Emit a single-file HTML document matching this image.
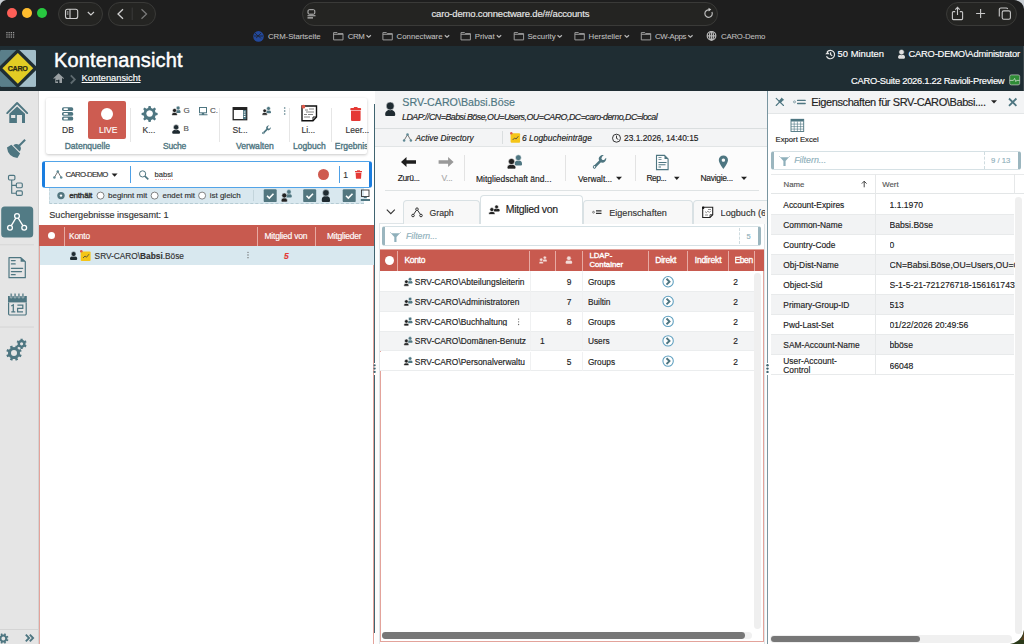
<!DOCTYPE html>
<html><head><meta charset="utf-8">
<style>
*{box-sizing:border-box;margin:0;padding:0}
html,body{width:1024px;height:644px;overflow:hidden;background:#fff;font-family:"Liberation Sans",sans-serif;color:#333}
.a{position:absolute}
.t{position:absolute;white-space:nowrap;line-height:1;-webkit-text-stroke:0.15px currentColor}
svg{position:absolute;overflow:visible}
/* chrome */
#chrome{left:0;top:0;width:1024px;height:46px;background:#1e1e1e}
.pill{position:absolute;border:1px solid #3a3a38;border-radius:12px;background:#242422}
.bm{position:absolute;top:32.7px;font-size:7.8px;color:#bdbdbd;line-height:1;white-space:nowrap;-webkit-text-stroke:0.1px #bdbdbd}
/* header */
#hdr{left:0;top:46px;width:1024px;height:45px;background:#1f2d33}
/* sidebar */
#side{left:0;top:91px;width:39px;height:553px;background:#e5e5e5;border-right:1px solid #d2d2d2}
.ic{fill:#4e7681}
</style></head><body>
<!-- ============ BROWSER CHROME ============ -->
<div id="chrome" class="a">
  <div class="a" style="left:7.3px;top:8.4px;width:10px;height:10px;border-radius:50%;background:#fe5f57"></div>
  <div class="a" style="left:22.3px;top:8.4px;width:10px;height:10px;border-radius:50%;background:#febc2e"></div>
  <div class="a" style="left:37.3px;top:8.4px;width:10px;height:10px;border-radius:50%;background:#28c840"></div>
  <div class="pill" style="left:58px;top:2px;width:45px;height:23.6px"></div>
  <div class="pill" style="left:108px;top:2px;width:48px;height:23.6px"></div>
  <div class="pill" style="left:301.5px;top:2px;width:416.5px;height:23.6px"></div>
  <div class="pill" style="left:945.7px;top:2px;width:71.5px;height:23.8px"></div>
  <div class="t" style="left:431.5px;top:9.2px;font-size:9.5px;color:#e8e8e8;letter-spacing:-0.17px">caro-demo.connectware.de/#/accounts</div>
  <div class="bm" style="left:268px;letter-spacing:-0.05px">CRM-Startseite</div>
  <div class="bm" style="left:347.7px;letter-spacing:-0.3px">CRM</div>
  <div class="bm" style="left:396.6px">Connectware</div>
  <div class="bm" style="left:474.7px">Privat</div>
  <div class="bm" style="left:527.4px">Security</div>
  <div class="bm" style="left:588.6px">Hersteller</div>
  <div class="bm" style="left:655px;letter-spacing:-0.3px">CW-Apps</div>
  <div class="bm" style="left:721px;letter-spacing:-0.2px">CARO-Demo</div>
  <svg style="left:0;top:0" width="1024" height="46">
    <g fill="none" stroke="#d0d0d0" stroke-width="1.1">
      <rect x="65.5" y="9.3" width="12.2" height="9.2" rx="2"/><path d="M70 9.3 v9.2"/>
      <path d="M87.8 12 l3.1 3 3.1-3"/>
      <path d="M123 9.3 l-5 4.7 5 4.7" stroke-width="1.3"/>
      <path d="M141.5 9.3 l5 4.7 -5 4.7" stroke="#7a7a7a" stroke-width="1.3"/>
    </g>
    <path d="M66.8 11.5h1.6v1h-1.6z M66.8 13.5h1.6v1h-1.6z" fill="#d0d0d0"/>
    <line x1="132.2" y1="7.6" x2="132.2" y2="20" stroke="#3a3a3a" stroke-width="1"/>
    <!-- reader -->
    <g fill="none" stroke="#bdbdbd" stroke-width="1"><rect x="308" y="9.7" width="6.8" height="4.5" rx="1.2"/></g>
    <path d="M307.5 15.2h8v1.1h-8z M307.5 17.3h5.5v1.1h-5.5z" fill="#bdbdbd"/>
    <!-- reload -->
    <path d="M711.9 12 a3.7 3.7 0 1 1 -2.6 -2" fill="none" stroke="#bdbdbd" stroke-width="1.2"/>
    <path d="M708.5 7.8 l2.8 1.7 -2.6 2z" fill="#d0d0d0"/>
    <!-- share -->
    <g fill="none" stroke="#c8c8c8" stroke-width="1.1">
      <path d="M955.2 11.6 h-1.8 a1 1 0 0 0 -1 1 v6 a1 1 0 0 0 1 1 h8.2 a1 1 0 0 0 1-1 v-6 a1 1 0 0 0 -1-1 h-1.8"/>
      <path d="M957.5 15 V7.5 M955.3 9.6 l2.2-2.2 2.2 2.2"/>
      <path d="M976.1 13.5 h9 M980.6 9 v9"/>
      <rect x="1002.2" y="10.9" width="8.2" height="8.4" rx="1.6"/>
      <path d="M999.3 16.4 v-6.8 a1.6 1.6 0 0 1 1.6-1.6 h5.3 a1.6 1.6 0 0 1 1.5 1"/>
    </g>
    <!-- grid -->
    <g fill="#9a9a9a">
      <rect x="6.3" y="32" width="1.3" height="1.3"/><rect x="8.5" y="32" width="1.3" height="1.3"/><rect x="10.7" y="32" width="1.3" height="1.3"/><rect x="12.9" y="32" width="1.3" height="1.3"/>
      <rect x="6.3" y="34.2" width="1.3" height="1.3"/><rect x="8.5" y="34.2" width="1.3" height="1.3"/><rect x="10.7" y="34.2" width="1.3" height="1.3"/><rect x="12.9" y="34.2" width="1.3" height="1.3"/>
      <rect x="6.3" y="36.4" width="1.3" height="1.3"/><rect x="8.5" y="36.4" width="1.3" height="1.3"/><rect x="10.7" y="36.4" width="1.3" height="1.3"/><rect x="12.9" y="36.4" width="1.3" height="1.3"/>
    </g>
    <!-- crm globe -->
    <circle cx="258.5" cy="36.4" r="5.3" fill="#23489a"/>
    <path d="M255 33 l3 3 3-3 M256 38 l2.5-2 2.5 2.5 M254 36 h9" stroke="#1e1e1e" stroke-width=".7" fill="none"/>
    <!-- folders -->
    <g fill="none" stroke="#9c9c9c" stroke-width="1">
      <path d="M333.6 32.6 h3.5 l1 1 h4.9 v6.3 h-9.4z M333.6 34.3 h9.4"/>
      <path d="M382.9 32.6 h3.5 l1 1 h4.9 v6.3 h-9.4z M382.9 34.3 h9.4"/>
      <path d="M461 32.6 h3.5 l1 1 h4.9 v6.3 h-9.4z M461 34.3 h9.4"/>
      <path d="M514.2 32.6 h3.5 l1 1 h4.9 v6.3 h-9.4z M514.2 34.3 h9.4"/>
      <path d="M574.9 32.6 h3.5 l1 1 h4.9 v6.3 h-9.4z M574.9 34.3 h9.4"/>
      <path d="M641.3 32.6 h3.5 l1 1 h4.9 v6.3 h-9.4z M641.3 34.3 h9.4"/>
    </g>
    <g fill="none" stroke="#b8b8b8" stroke-width="1.2">
      <path d="M366.5 35.3 l2.2 2 2.2-2"/><path d="M444.8 35.3 l2.2 2 2.2-2"/><path d="M496.8 35.3 l2.2 2 2.2-2"/>
      <path d="M557.5 35.3 l2.2 2 2.2-2"/><path d="M624.6 35.3 l2.2 2 2.2-2"/><path d="M688.2 35.3 l2.2 2 2.2-2"/>
      <circle cx="711.5" cy="35.8" r="4.3"/><path d="M707.2 35.8 h8.6 M711.5 31.5 v8.6"/><ellipse cx="711.5" cy="35.8" rx="2" ry="4.3"/>
    </g>
  </svg>
</div>
<!-- ============ APP HEADER ============ -->
<div id="hdr" class="a">
  <div class="t" style="left:54px;top:3.6px;font-size:20px;color:#fff;letter-spacing:0.15px;-webkit-text-stroke:0.45px #fff">Kontenansicht</div>
  <div class="t" style="left:81.6px;top:28.3px;font-size:9.3px;color:#fff;text-decoration:underline">Kontenansicht</div>
  <div class="t" style="left:837.6px;top:3.3px;font-size:9.4px;color:#fff">50 Minuten</div>
  <div class="t" style="left:908.4px;top:3.3px;font-size:9.4px;color:#fff;letter-spacing:-0.2px">CARO-DEMO\Administrator</div>
  <div class="t" style="left:851px;top:30.3px;font-size:9.4px;color:#fff;letter-spacing:-0.27px">CARO-Suite 2026.1.22 Ravioli-Preview</div>
</div>
<svg style="left:0;top:0" width="1024" height="91">
  <!-- logo -->
  <defs><clipPath id="lc"><rect x="0" y="49.8" width="36" height="37.1" rx="1.5"/></clipPath></defs>
  <g clip-path="url(#lc)">
    <rect x="0" y="49.8" width="18" height="37.1" fill="#5a7f8a"/>
    <rect x="18" y="49.8" width="18" height="37.1" fill="#a2bec9"/>
    <path d="M17.8 48.5 L38 68.3 L17.8 88.1 L-2.4 68.3z" fill="#1f2d33"/>
  </g>
  <path d="M17.8 53 L33.2 68.3 L17.8 83.8 L2.4 68.3z" fill="#e2cc24"/>
  <text x="17.6" y="71" text-anchor="middle" font-family="Liberation Sans" font-weight="bold" font-size="7.2" fill="#2b2a14" stroke="#2b2a14" stroke-width="0.25" letter-spacing="-0.35">CARO</text>
  <!-- home -->
  <path d="M58.6 73.3 L53.3 78.2 L54 78.9 L55.3 77.7 V83.1 H58 V79.8 H59.4 V83.1 H62 V77.7 L63.3 78.9 L64 78.2z" fill="#9aa0a3"/>
  <path d="M56.2 80 h1.6 v1.5 h-1.6z" fill="#1f2d33"/>
  <path d="M70.8 75.3 L74.8 79.4 L70.8 83.5" fill="none" stroke="#5f6b70" stroke-width="1.8"/>
  <!-- history -->
  <g fill="none" stroke="#e8e8e8" stroke-width="1.2"><path d="M827 52 a4.2 4.2 0 1 1 -.5 4.2"/><path d="M830.6 52.2 v2.3 l1.6 1.4"/></g>
  <path d="M825.3 54.2 l2.2-2.8 2.2 2.8z" fill="#e8e8e8"/>
  <!-- user -->
  <g><path d="M898.10 57.60 L898.10 57.14 A3.45 2.55 0 0 1 905.00 57.14 L905.00 57.60 Q905.00 58.70 903.90 58.70 L899.20 58.70 Q898.10 58.70 898.10 57.60Z" fill="#e0e0e0"/><circle cx="901.55" cy="52.10" r="2.70" fill="#e0e0e0" stroke="#1f2d33" stroke-width="0.55"/></g>
  <!-- green -->
  <rect x="1009.7" y="74.9" width="10" height="10" rx="1.6" fill="#2f8c36" stroke="#c5c5c5" stroke-width=".7"/>
  <path d="M1009.7 80.4 h3.7 l1.2-2 1.2 3.2 .8-1.2 h3.1" fill="none" stroke="#c8dcc8" stroke-width=".8"/>
  <rect x="1023" y="46" width="1" height="45" fill="#3d474c"/>
</svg>
<!-- ============ SIDEBAR ============ -->
<div id="side" class="a"></div>

<!-- ============ SIDEBAR ICONS ============ -->
<svg style="left:0;top:0" width="38" height="644">
  <!-- home -->
  <path d="M7.2 113.1 L17.1 103 L27.2 113.1" fill="none" stroke="#4e7681" stroke-width="1.9" stroke-linecap="round" stroke-linejoin="round"/>
  <path class="ic" d="M9.3 113.8 L17.1 106.4 L25 113.8 V122.9 H22 V115 H16.9 V122.9 H9.3z M11.1 115.1 V117.9 H15.3 V115.1z" fill-rule="evenodd"/>
  <!-- broom -->
  <g transform="translate(15.8 149.1) rotate(45)" class="ic">
    <rect x="-0.95" y="-13.2" width="1.9" height="8.5"/>
    <path d="M-4.4 -0.9 Q-4.2 -4.6 -0.9 -5.2 H0.9 Q4.2 -4.6 4.4 -0.9z"/>
    <path d="M-6.2 0.1 H6.2 L7.4 5.1 Q0 11 -7.4 5.1z"/>
  </g>
  <!-- tree -->
  <g fill="none" stroke="#4e7681" stroke-width="1.15">
    <rect x="8.5" y="175.4" width="6.4" height="4.6" rx="1.2"/>
    <rect x="16.3" y="183" width="6" height="4.7" rx="1.2"/>
    <rect x="16.3" y="190.9" width="6" height="4.5" rx="1.2"/>
    <path d="M11.7 180 V193.2 H16.3 M11.7 185.3 H16.3"/>
  </g>
  <!-- active -->
  <rect x="1.2" y="206.6" width="32" height="31" rx="3.5" fill="#527b85"/>
  <g fill="none" stroke="#fff" stroke-width="1.3">
    <circle cx="17" cy="216" r="2.4"/><circle cx="10" cy="227.7" r="2.4"/><circle cx="24.2" cy="227.7" r="2.4"/>
    <path d="M15.8 218.2 L11.3 225.6 M18.2 218.2 L22.9 225.6"/>
  </g>
  <!-- document -->
  <path d="M9 257.7 H20.8 L25.3 261.6 V277.7 H9z" fill="none" stroke="#4e7681" stroke-width="1.2" stroke-linejoin="round"/>
  <path d="M20.6 257.6 V261.8 H25.4 z" fill="#4e7681"/>
  <path d="M11.4 260.6 h3.8 M11.4 263.9 h3.8 M11.4 268.3 h11.3 M11.4 271.6 h10.1 M11.4 274.7 h3.8" stroke="#4e7681" stroke-width="1.2" stroke-linecap="round"/>
  <!-- calendar -->
  <path d="M8.6 302.5 V313.8 a1.2 1.2 0 0 0 1.2 1.2 H25 a1.2 1.2 0 0 0 1.2-1.2 V302.5" fill="none" stroke="#4e7681" stroke-width="1.2"/>
  <rect x="8" y="296" width="18.8" height="6.4" fill="#4e7681"/>
  <g fill="#4e7681" stroke="#e5e5e5" stroke-width=".6">
    <rect x="10.2" y="293.3" width="1.9" height="4.6" rx=".6"/><rect x="14.1" y="293.3" width="1.9" height="4.6" rx=".6"/><rect x="18" y="293.3" width="1.9" height="4.6" rx=".6"/><rect x="22" y="293.3" width="1.9" height="4.6" rx=".6"/>
  </g>
  <path d="M11.3 306 L13.3 304.9 V311.8 M11.3 311.8 H15.3 M17.4 305.2 H22.8 V308.3 H17.6 V311.8 H23" fill="none" stroke="#4e7681" stroke-width="1.25"/>
  <line x1="0" y1="327" x2="34" y2="327" stroke="#d4d4d4" stroke-width="1"/><line x1="0" y1="244.8" x2="34" y2="244.8" stroke="#d6d6d6" stroke-width="1"/>
  <!-- gears -->
  <path class="ic" fill-rule="evenodd" d="M20.00 353.10 L19.89 354.22 L21.70 354.88 L20.70 357.28 L18.96 356.47 L18.24 357.34 L17.37 358.06 L18.18 359.80 L15.78 360.80 L15.12 358.99 L14.00 359.10 L12.88 358.99 L12.22 360.80 L9.82 359.80 L10.63 358.06 L9.76 357.34 L9.04 356.47 L7.30 357.28 L6.30 354.88 L8.11 354.22 L8.00 353.10 L8.11 351.98 L6.30 351.32 L7.30 348.92 L9.04 349.73 L9.76 348.86 L10.63 348.14 L9.82 346.40 L12.22 345.40 L12.88 347.21 L14.00 347.10 L15.12 347.21 L15.78 345.40 L18.18 346.40 L17.37 348.14 L18.24 348.86 L18.96 349.73 L20.70 348.92 L21.70 351.32 L19.89 351.98Z M17.00 353.10 A3.0 3.0 0 1 0 11.00 353.10 A3.0 3.0 0 1 0 17.00 353.10Z"/>
  <path class="ic" fill-rule="evenodd" d="M25.60 343.80 L25.47 344.79 L26.66 345.38 L25.50 347.39 L24.40 346.66 L23.60 347.26 L22.68 347.65 L22.76 348.97 L20.44 348.97 L20.52 347.65 L19.60 347.26 L18.80 346.66 L17.70 347.39 L16.54 345.38 L17.73 344.79 L17.60 343.80 L17.73 342.81 L16.54 342.22 L17.70 340.21 L18.80 340.94 L19.60 340.34 L20.52 339.95 L20.44 338.63 L22.76 338.63 L22.68 339.95 L23.60 340.34 L24.40 340.94 L25.50 340.21 L26.66 342.22 L25.47 342.81Z M23.20 343.80 A1.6 1.6 0 1 0 20.00 343.80 A1.6 1.6 0 1 0 23.20 343.80Z"/>
  <line x1="0" y1="629.5" x2="38" y2="629.5" stroke="#d4d4d4" stroke-width="1"/>
  <path d="M25.8 634.6 L29.1 638 L25.8 641.4 M29.8 634.6 L33.1 638 L29.8 641.4" fill="none" stroke="#4e7681" stroke-width="1.9"/>
  <path class="ic" fill-rule="evenodd" d="M7.30 638.50 L7.23 639.25 L8.46 639.70 L7.80 641.30 L6.61 640.75 L6.13 641.33 L5.55 641.81 L6.10 643.00 L4.50 643.66 L4.05 642.43 L3.30 642.50 L2.55 642.43 L2.10 643.66 L0.50 643.00 L1.05 641.81 L0.47 641.33 L-0.01 640.75 L-1.20 641.30 L-1.86 639.70 L-0.63 639.25 L-0.70 638.50 L-0.63 637.75 L-1.86 637.30 L-1.20 635.70 L-0.01 636.25 L0.47 635.67 L1.05 635.19 L0.50 634.00 L2.10 633.34 L2.55 634.57 L3.30 634.50 L4.05 634.57 L4.50 633.34 L6.10 634.00 L5.55 635.19 L6.13 635.67 L6.61 636.25 L7.80 635.70 L8.46 637.30 L7.23 637.75Z M5.20 638.50 A1.9 1.9 0 1 0 1.40 638.50 A1.9 1.9 0 1 0 5.20 638.50Z"/>
</svg>
<!-- ============ LEFT PANEL ============ -->
<div class="a" style="left:39px;top:91px;width:335px;height:553px;background:#fff"></div>
<!-- ribbon card -->
<div class="a" style="left:46px;top:98px;width:321px;height:56px;background:#fff;box-shadow:0 1px 3px rgba(0,0,0,.22);border-radius:2px"></div>
<div class="a" style="left:88.2px;top:101px;width:38.3px;height:38px;background:#cd5c51;border-radius:2px"></div>
<div class="a" style="left:101.3px;top:107.8px;width:12px;height:12px;border-radius:50%;background:#fff"></div>
<div class="t" style="left:99px;top:125.5px;font-size:8.5px;color:#fff">LIVE</div>
<div class="t" style="left:62px;top:125.5px;font-size:8.5px;color:#333">DB</div>
<div class="t" style="left:142.5px;top:125.5px;font-size:8.5px;color:#333">K...</div>
<div class="t" style="left:183.5px;top:107px;font-size:8px;color:#555">G</div>
<div class="t" style="left:183.5px;top:125px;font-size:8px;color:#555">B</div>
<div class="t" style="left:210px;top:107px;font-size:8px;color:#555">C.</div>
<div class="t" style="left:232.5px;top:125.5px;font-size:8.5px;color:#333">St...</div>
<div class="t" style="left:301.5px;top:125.5px;font-size:8.5px;color:#333">Li...</div>
<div class="t" style="left:345.5px;top:125.5px;font-size:8.5px;color:#333">Leer...</div>
<div class="t" style="left:64.7px;top:142.2px;font-size:8.5px;color:#4e7681;-webkit-text-stroke:0.35px #4e7681">Datenquelle</div>
<div class="t" style="left:163px;top:142.2px;font-size:8.5px;letter-spacing:-0.2px;color:#4e7681;-webkit-text-stroke:0.35px #4e7681">Suche</div>
<div class="t" style="left:236px;top:142.2px;font-size:8.6px;color:#4e7681;-webkit-text-stroke:0.35px #4e7681">Verwalten</div>
<div class="t" style="left:293px;top:142.2px;font-size:8.5px;color:#4e7681;-webkit-text-stroke:0.35px #4e7681">Logbuch</div>
<div class="t" style="left:334.8px;top:142.2px;font-size:8.5px;color:#4e7681;width:32px;overflow:hidden;-webkit-text-stroke:0.35px #4e7681">Ergebnis</div>
<div class="a" style="left:130px;top:108px;width:1px;height:34px;background:#e6e6e6"></div>
<div class="a" style="left:219.4px;top:108px;width:1px;height:34px;background:#e6e6e6"></div>
<div class="a" style="left:289px;top:108px;width:1px;height:34px;background:#e6e6e6"></div>
<div class="a" style="left:331.3px;top:108px;width:1px;height:34px;background:#e6e6e6"></div>
<svg style="left:0;top:0" width="380" height="644">
  <!-- DB icon -->
  <g fill="#4e7681">
    <rect x="62" y="107.2" width="11.2" height="3.9" rx="1.6"/>
    <rect x="62" y="111.9" width="11.2" height="3.9" rx="1.6"/>
    <rect x="62" y="116.6" width="11.2" height="3.9" rx="1.6"/>
  </g>
  <g fill="#fff"><rect x="63.6" y="108.3" width="4.3" height="1.8" rx=".5"/><rect x="63.6" y="113" width="4.3" height="1.8" rx=".5"/><rect x="63.6" y="117.7" width="4.3" height="1.8" rx=".5"/></g>
  <!-- gear -->
  <g fill="#4e7681">
    <path d="M148.6 106 h2 l.5 2 1.7.7 1.8-1.1 1.4 1.4-1.1 1.8 .7 1.7 2 .5 v2 l-2 .5-.7 1.7 1.1 1.8-1.4 1.4-1.8-1.1-1.7.7-.5 2 h-2 l-.5-2-1.7-.7-1.8 1.1-1.4-1.4 1.1-1.8-.7-1.7-2-.5 v-2 l2-.5 .7-1.7-1.1-1.8 1.4-1.4 1.8 1.1 1.7-.7z M149.6 110.2 a3.3 3.3 0 1 0 .01 0z" fill-rule="evenodd"/>
  </g>
  <!-- group small -->
  <g>
    <path d="M175.60 112.20 L175.60 111.78 A2.50 1.98 0 0 1 180.60 111.78 L180.60 112.20 Q180.60 113.00 179.80 113.00 L176.40 113.00 Q175.60 113.00 175.60 112.20Z" fill="#4e7681"/><circle cx="178.10" cy="108.00" r="2.00" fill="#4e7681" stroke="#fff" stroke-width="0.55"/>
    <path d="M171.80 114.62 L171.80 114.29 A2.75 1.97 0 0 1 177.30 114.29 L177.30 114.62 Q177.30 115.50 176.42 115.50 L172.68 115.50 Q171.80 115.50 171.80 114.62Z" fill="#222" stroke="#fff" stroke-width="0.6"/><circle cx="174.55" cy="110.46" r="2.06" fill="#222" stroke="#fff" stroke-width="0.55"/>
  </g>
  <!-- person small -->
  <g><path d="M172.20 132.70 L172.20 132.26 A3.90 2.52 0 0 1 180.00 132.26 L180.00 132.70 Q180.00 133.80 178.90 133.80 L173.30 133.80 Q172.20 133.80 172.20 132.70Z" fill="#1f2b31"/><circle cx="176.10" cy="127.27" r="2.67" fill="#1f2b31" stroke="#fff" stroke-width="0.55"/></g>
  <!-- monitor -->
  <g fill="none" stroke="#4e7681" stroke-width="1"><rect x="199.5" y="107.5" width="7" height="5.3"/></g>
  <path d="M201.8 113 h2.4 v1.2 h-2.4z M199 114.3 h8.5 v1 h-8.5z" fill="#4e7681"/>
  <!-- window icon -->
  <g><rect x="233.2" y="107.7" width="13.5" height="12" fill="none" stroke="#222" stroke-width="1.3"/><rect x="233" y="107.5" width="14" height="2.5" fill="#222"/>
  <rect x="243" y="110" width="3.2" height="9.2" fill="#4e7681"/><path d="M243.8 111.5h1.6v1h-1.6z M243.8 113.8h1.6v1h-1.6z M243.8 116.1h1.6v1h-1.6z" fill="#fff"/></g>
  <!-- group -->
  <g>
    <path d="M266.00 112.40 L266.00 112.05 A2.50 1.87 0 0 1 271.00 112.05 L271.00 112.40 Q271.00 113.20 270.20 113.20 L266.80 113.20 Q266.00 113.20 266.00 112.40Z" fill="#4e7681"/><circle cx="268.50" cy="108.44" r="1.94" fill="#4e7681" stroke="#fff" stroke-width="0.55"/>
    <path d="M262.00 114.34 L262.00 114.13 A2.70 1.74 0 0 1 267.40 114.13 L267.40 114.34 Q267.40 115.20 266.54 115.20 L262.86 115.20 Q262.00 115.20 262.00 114.34Z" fill="#222" stroke="#fff" stroke-width="0.6"/><circle cx="264.70" cy="110.80" r="1.80" fill="#222" stroke="#fff" stroke-width="0.55"/>
  </g>
  <!-- wrench -->
  <g transform="translate(263.2 133.2) rotate(-45) scale(0.64)"><path d="M0 -1.3 H9.5 V1.3 H0 A1.3 1.3 0 0 1 0 -1.3Z" fill="#4e7681"/><circle cx="0.3" cy="0" r="1.7" fill="#4e7681"/><circle cx="11.6" cy="0" r="3.6" fill="#4e7681"/><circle cx="12.6" cy="0" r="1.75" fill="#fff"/><rect x="12.6" y="-1.75" width="4" height="3.5" fill="#fff"/><circle cx="0.3" cy="0" r="0.75" fill="#fff"/></g>
  <!-- dots -->
  <g fill="#4e7681"><circle cx="284.7" cy="108" r=".8"/><circle cx="284.7" cy="111" r=".8"/><circle cx="284.7" cy="114" r=".8"/></g>
  <!-- logbook icon -->
  <g><path d="M302 106 h14.5 v11 l-3.5 3.8 h-11z" fill="#fff" stroke="#111" stroke-width="1.4"/>
  <path d="M316.5 117 h-3.5 v3.8" fill="none" stroke="#111" stroke-width="1"/>
  <circle cx="303.4" cy="106.7" r="1.9" fill="#e05a4a"/>
  <path d="M305 110 h3 M309 109 h5 M306 112 h8 M304 114.5 h3 M308 114.5 h5 M304 117 h6" stroke="#333" stroke-width=".6"/></g>
  <!-- trash -->
  <g fill="#e53935"><rect x="350.3" y="108" width="10.8" height="2.2" rx=".8"/><rect x="353.8" y="107" width="3.8" height="1.6" rx=".5"/><path d="M351 110.8 h9.6 v9.2 a1 1 0 0 1 -1 1 h-7.6 a1 1 0 0 1 -1-1z"/></g>
</svg>
<!-- search box -->
<div class="a" style="left:41.5px;top:161px;width:330px;height:26.5px;border:1px solid #52a4e8;border-left:3.5px solid #1a7ee0;border-right:3.5px solid #1a7ee0;border-radius:3px;background:#fff"></div>
<div class="a" style="left:130.3px;top:166.3px;width:1.2px;height:17px;background:#4ea0e6"></div>
<div class="a" style="left:339.3px;top:166.3px;width:1.2px;height:17px;background:#4ea0e6"></div>
<div class="t" style="left:65.6px;top:171.2px;font-size:7.8px;color:#333;letter-spacing:-0.72px">CARO-DEMO</div>
<div class="t" style="left:154.6px;top:171px;font-size:7.6px;color:#333">babsi</div>
<div class="a" style="left:154.6px;top:178.5px;width:18px;height:1px;border-bottom:1px dotted #f0b0b0"></div>
<div class="t" style="left:343.3px;top:170.5px;font-size:8.5px;color:#333">1</div>
<div class="a" style="left:318.3px;top:168.8px;width:11px;height:11px;border-radius:50%;background:#cf5a4f"></div>
<svg style="left:0;top:0" width="380" height="260">
  <path d="M57.8 171.6 L54.4 177.4 M57.8 171.6 L61.2 177.4" stroke="#555" stroke-width=".8" fill="none"/><g fill="#5f8a95"><circle cx="57.8" cy="171.6" r="1.25"/><circle cx="54.4" cy="177.4" r="1.25"/><circle cx="61.2" cy="177.4" r="1.25"/></g>
  <path d="M111.6 173.5 h6 l-3 3.3z" fill="#222"/>
  <g fill="none" stroke="#4e7681" stroke-width="1"><circle cx="142.6" cy="173.9" r="3.1"/><path d="M144.9 176.2 L148.3 179.4" stroke-width="1.6"/></g>
  <g fill="#e53935"><rect x="355" y="171" width="7" height="1.2"/><rect x="357" y="170.3" width="3" height="1"/><path d="M355.6 172.8 h5.8 l-.4 6 h-5z"/></g>
</svg>
<!-- radio row -->
<div class="a" style="left:49px;top:188px;width:315px;height:15.8px;background:#d9e8ef;border-bottom:1px dashed #b5cbd3;border-left:1px dashed #c5d7de"></div>
<div class="a" style="left:252.5px;top:190px;width:1px;height:11px;background:#c3d5dc"></div>
<svg style="left:0;top:0" width="380" height="260">
  <circle cx="61" cy="195.6" r="3.7" fill="#52767f"/><circle cx="61" cy="195.6" r="1.2" fill="#fff"/>
  <circle cx="100.5" cy="195.6" r="3.5" fill="#fff" stroke="#666" stroke-width=".8"/>
  <circle cx="154.6" cy="195.6" r="3.5" fill="#fff" stroke="#666" stroke-width=".8"/>
  <circle cx="202.1" cy="195.6" r="3.5" fill="#fff" stroke="#666" stroke-width=".8"/>
  <g fill="#52767f"><rect x="263.7" y="189.3" width="13" height="12.8" rx="1.2"/><rect x="303.2" y="189.3" width="13" height="12.8" rx="1.2"/><rect x="342.7" y="189.3" width="13" height="12.8" rx="1.2"/></g>
  <g fill="none" stroke="#fff" stroke-width="1.6"><path d="M267 195.8 l2.3 2.3 4.2-4.4"/><path d="M306.5 195.8 l2.3 2.3 4.2-4.4"/><path d="M346 195.8 l2.3 2.3 4.2-4.4"/></g>
  <g>
    <path d="M286.00 196.57 L286.00 196.16 A2.90 2.18 0 0 1 291.80 196.16 L291.80 196.57 Q291.80 197.50 290.87 197.50 L286.93 197.50 Q286.00 197.50 286.00 196.57Z" fill="#4e7681"/><circle cx="288.90" cy="191.89" r="2.29" fill="#4e7681" stroke="#d9e8ef" stroke-width="0.55"/>
    <path d="M281.20 201.01 L281.20 200.39 A3.10 2.63 0 0 1 287.40 200.39 L287.40 201.01 Q287.40 202.00 286.41 202.00 L282.19 202.00 Q281.20 202.00 281.20 201.01Z" fill="#222" stroke="#d9e8ef" stroke-width="0.6"/><circle cx="284.30" cy="195.48" r="2.48" fill="#222" stroke="#d9e8ef" stroke-width="0.55"/>
  </g>
  <g><path d="M321.80 200.90 L321.80 199.70 A4.10 3.74 0 0 1 330.00 199.70 L330.00 200.90 Q330.00 202.00 328.90 202.00 L322.90 202.00 Q321.80 202.00 321.80 200.90Z" fill="#1f2b31"/><circle cx="325.90" cy="192.88" r="3.28" fill="#1f2b31" stroke="#d9e8ef" stroke-width="0.55"/></g>
  <g fill="none" stroke="#333" stroke-width=".9"><rect x="361.5" y="190" width="7.5" height="6.5"/></g>
  <path d="M363.8 196.8 h3 v1.5 h-3z M360.8 199 h9.2 v2 h-9.2z" fill="#4e7681"/>
</svg>
<div class="t" style="left:69.2px;top:192.2px;font-size:8px;color:#333;letter-spacing:-0.15px;-webkit-text-stroke:0.4px #333">enthält</div>
<div class="t" style="left:108px;top:192.2px;font-size:8px;color:#333">beginnt mit</div>
<div class="t" style="left:162.6px;top:192.2px;font-size:7.9px;color:#333">endet mit</div>
<div class="t" style="left:209.7px;top:192.2px;font-size:8px;color:#333">ist gleich</div>
<div class="t" style="left:49.3px;top:211px;font-size:9.1px;color:#333">Suchergebnisse insgesamt: 1</div>
<!-- left table -->
<div class="a" style="left:39px;top:225px;width:335px;height:419px;border-left:1px solid #e3a39b;border-right:1px solid #e3a39b"></div>
<div class="a" style="left:39px;top:225.3px;width:334.5px;height:20.4px;background:#c85a4f"></div>
<div class="a" style="left:48px;top:232.3px;width:7px;height:7px;border-radius:50%;background:#fff"></div>
<div class="a" style="left:63.8px;top:227px;width:1px;height:18.7px;background:#e7aaa3"></div>
<div class="a" style="left:256.8px;top:227px;width:1px;height:18.7px;background:#e7aaa3"></div>
<div class="a" style="left:314.5px;top:227px;width:1px;height:18.7px;background:#e7aaa3"></div>
<div class="t" style="left:69px;top:232px;font-size:8.3px;color:#fff;letter-spacing:-0.15px">Konto</div>
<div class="t" style="left:264.5px;top:231.5px;font-size:8.5px;color:#fff;letter-spacing:-0.22px">Mitglied von</div>
<div class="t" style="left:327px;top:231.5px;font-size:8.5px;color:#fff;letter-spacing:-0.26px">Mitglieder</div>
<div class="a" style="left:40px;top:245.7px;width:333.5px;height:19px;background:#d8e8ef"></div>
<div class="t" style="left:94.6px;top:251.5px;font-size:8.3px;color:#333">SRV-CARO\<b>Babsi</b>.Böse</div>
<div class="t" style="left:284px;top:251.5px;font-size:8.5px;color:#e53935;font-weight:bold;font-style:italic">5</div>
<svg style="left:0;top:0" width="380" height="270">
  <g><path d="M70.00 258.90 L70.00 258.58 A3.60 2.31 0 0 1 77.20 258.58 L77.20 258.90 Q77.20 260.00 76.10 260.00 L71.10 260.00 Q70.00 260.00 70.00 258.90Z" fill="#1f2b31"/><circle cx="73.60" cy="254.04" r="2.44" fill="#1f2b31" stroke="#d8e8ef" stroke-width="0.55"/></g>
  <rect x="80.7" y="251.5" width="9.9" height="9.5" rx="1" fill="#f5c518"/>
  <circle cx="81.3" cy="251.3" r="1.3" fill="#e05a4a"/>
  <path d="M83 258 l2-2 1.5 1.2 2.5-3" stroke="#444" stroke-width=".8" fill="none"/>
  <g fill="#666"><circle cx="248" cy="252.3" r=".65"/><circle cx="248" cy="255" r=".65"/><circle cx="248" cy="257.7" r=".65"/></g>
</svg>
<!-- splitter -->
<div class="a" style="left:374px;top:104px;width:1.2px;height:529px;background:#3f6470"></div>

<!-- ============ MIDDLE PANEL ============ -->
<div class="a" style="left:375.2px;top:91px;width:392px;height:553px;background:#fcfcfc"></div>
<div class="a" style="left:375.2px;top:91px;width:392px;height:56px;background:#f3f4f5;border-bottom:1px solid #e2e5e6"></div>
<div class="a" style="left:375.2px;top:128px;width:392px;height:1px;background:#dadedf"></div>
<div class="t" style="left:402.3px;top:96.6px;font-size:10.7px;color:#4e7681">SRV-CARO\Babsi.Böse</div>
<div class="t" style="left:402px;top:112.6px;font-size:8.9px;font-style:italic;color:#222;letter-spacing:-0.52px">LDAP://CN=Babsi.Böse,OU=Users,OU=CARO,DC=caro-demo,DC=local</div>
<div class="t" style="left:415.5px;top:134.3px;font-size:8.3px;font-style:italic;color:#222">Active Directory</div>
<div class="a" style="left:502px;top:131px;width:1px;height:13px;background:#dadedf"></div>
<div class="t" style="left:522px;top:134.3px;font-size:8.45px;font-style:italic;color:#222">6 Logbucheinträge</div>
<div class="t" style="left:624px;top:134.3px;font-size:8.4px;color:#222">23.1.2026, 14:40:15</div>
<!-- toolbar -->
<div class="t" style="left:397.7px;top:174.3px;font-size:8.5px;color:#222;letter-spacing:-0.38px">Zurü...</div>
<div class="t" style="left:441.5px;top:174.3px;font-size:8.5px;color:#aaa;letter-spacing:-0.3px">V...</div>
<div class="t" style="left:476px;top:174.5px;font-size:8.5px;color:#222">Mitgliedschaft änd...</div>
<div class="t" style="left:578px;top:174.5px;font-size:8.3px;color:#222">Verwalt...</div>
<div class="t" style="left:646.5px;top:174.3px;font-size:8.5px;color:#222;letter-spacing:-0.53px">Rep...</div>
<div class="t" style="left:700.5px;top:174.3px;font-size:8.5px;color:#222;letter-spacing:-0.32px">Navigie...</div>
<div class="a" style="left:463.6px;top:155.4px;width:1px;height:26px;background:#e3e3e3"></div>
<div class="a" style="left:565.3px;top:155.4px;width:1px;height:26px;background:#e3e3e3"></div>
<div class="a" style="left:634.5px;top:155.4px;width:1px;height:26px;background:#e3e3e3"></div>
<div class="a" style="left:385px;top:190px;width:374px;height:1px;background:#dfe3e4"></div>
<!-- tabs -->
<div class="a" style="left:379px;top:223px;width:386px;height:421px;border:1px solid #dfe5e8;border-bottom:none;background:#fff"></div>
<div class="a" style="left:402.5px;top:200.3px;width:77.5px;height:23.5px;background:#f8f8f8;border:1px solid #d9e1e4;border-bottom:none;border-radius:4px 4px 0 0"></div>
<div class="a" style="left:480px;top:195px;width:103px;height:29px;background:#fff;border:1px solid #d9e1e4;border-bottom:none;border-radius:4px 4px 0 0"></div>
<div class="a" style="left:583px;top:200.3px;width:110px;height:23.5px;background:#f8f8f8;border:1px solid #d9e1e4;border-bottom:none;border-radius:4px 4px 0 0"></div>
<div class="a" style="left:693.4px;top:200.3px;width:80px;height:23.5px;background:#f8f8f8;border:1px solid #d9e1e4;border-bottom:none;border-radius:4px 4px 0 0"></div>
<div class="a" style="left:767px;top:195px;width:10px;height:30px;background:#fff"></div>
<div class="t" style="left:429.5px;top:208.6px;font-size:8.7px;color:#333">Graph</div>
<div class="t" style="left:505.8px;top:204.3px;font-size:10.5px;color:#222;letter-spacing:-0.35px">Mitglied von</div>
<div class="t" style="left:609.2px;top:208.7px;font-size:9.1px;color:#333">Eigenschaften</div>
<div class="t" style="left:720.6px;top:208.7px;font-size:9.1px;color:#333;width:44.5px;overflow:hidden">Logbuch (6</div>
<!-- filter -->
<div class="a" style="left:382px;top:226.4px;width:379px;height:19.6px;border:1px solid #d6e1e5;border-left:3.5px solid #9bb6bf;border-right:3.5px solid #9bb6bf;border-radius:3px;background:#fff"></div>
<div class="a" style="left:739.4px;top:228px;width:0;height:16px;border-left:1px dashed #cfdce0"></div>
<div class="t" style="left:406px;top:232px;font-size:8.7px;font-style:italic;color:#8fb0bb">Filtern...</div>
<div class="t" style="left:746.5px;top:232.5px;font-size:7.5px;color:#8fb0bb">5</div>
<!-- table -->
<div class="a" style="left:379.5px;top:249px;width:384.5px;height:392.5px;border:1px solid #e3a39b;background:#fff"></div>
<div class="a" style="left:380px;top:250px;width:383.5px;height:21px;background:#c85a4f"></div>
<div class="a" style="left:384.7px;top:256px;width:9px;height:9px;border-radius:50%;background:#fff"></div>
<div class="a" style="left:397px;top:250.5px;width:1px;height:20.5px;background:#e7aaa3"></div>
<div class="a" style="left:529px;top:250.5px;width:1px;height:20.5px;background:#e7aaa3"></div>
<div class="a" style="left:555px;top:250.5px;width:1px;height:20.5px;background:#e7aaa3"></div>
<div class="a" style="left:582.4px;top:250.5px;width:1px;height:20.5px;background:#e7aaa3"></div>
<div class="a" style="left:648.3px;top:250.5px;width:1px;height:20.5px;background:#e7aaa3"></div>
<div class="a" style="left:687.3px;top:250.5px;width:1px;height:20.5px;background:#e7aaa3"></div>
<div class="a" style="left:727.8px;top:250.5px;width:1px;height:20.5px;background:#e7aaa3"></div>
<div class="a" style="left:754.3px;top:250.5px;width:1px;height:20.5px;background:#e7aaa3"></div>
<div class="t" style="left:404.5px;top:256px;font-size:8.5px;color:#fff;letter-spacing:-0.34px;-webkit-text-stroke:0.35px #fff">Konto</div>
<div class="t" style="left:589.4px;top:251px;font-size:7.8px;color:#fff;line-height:9.4px;-webkit-text-stroke:0.35px #fff">LDAP-<br>Container</div>
<div class="t" style="left:655.2px;top:256px;font-size:8.5px;color:#fff;letter-spacing:-0.18px;-webkit-text-stroke:0.35px #fff">Direkt</div>
<div class="t" style="left:694.7px;top:256px;font-size:8.5px;color:#fff;letter-spacing:-0.14px;-webkit-text-stroke:0.35px #fff">Indirekt</div>
<div class="t" style="left:734.5px;top:256px;font-size:8.5px;color:#fff;letter-spacing:-0.4px;-webkit-text-stroke:0.35px #fff;width:19.5px;overflow:hidden">Eben</div>
<div class="a" style="left:754.3px;top:273.4px;width:6.8px;height:355.6px;background:#efefef;border-radius:3.4px"></div>
<div class="a" style="left:380px;top:270.80px;width:374px;height:20.90px;background:#fff;border-bottom:1px solid #ebedee"></div>
<div class="a" style="left:529.5px;top:270.80px;width:1px;height:20.90px;background:#f0f1f2"></div>
<div class="a" style="left:582.3px;top:270.80px;width:1px;height:20.90px;background:#f0f1f2"></div>
<div class="t" style="left:414.8px;top:278.20px;font-size:8.4px;color:#222;width:113px;overflow:hidden">SRV-CARO\Abteilungsleiterin</div>
<div class="t" style="left:566.7px;top:278.20px;font-size:8.4px;color:#222">9</div>
<div class="t" style="left:587.9px;top:278.20px;font-size:8.3px;color:#222">Groups</div>
<div class="t" style="left:733.2px;top:278.20px;font-size:8.4px;color:#222">2</div>
<svg style="left:0;top:0" width="760" height="400">
<path d="M407.60 282.80 L407.60 282.53 A2.50 1.74 0 0 1 412.60 282.53 L412.60 282.80 Q412.60 283.60 411.80 283.60 L408.40 283.60 Q407.60 283.60 407.60 282.80Z" fill="#4e7681"/><circle cx="410.10" cy="279.20" r="1.80" fill="#4e7681" stroke="#fff" stroke-width="0.55"/>
<path d="M403.80 285.38 L403.80 285.12 A2.55 1.76 0 0 1 408.90 285.12 L408.90 285.38 Q408.90 286.20 408.08 286.20 L404.62 286.20 Q403.80 286.20 403.80 285.38Z" fill="#222" stroke="#fff" stroke-width="0.6"/><circle cx="406.35" cy="281.73" r="1.83" fill="#222" stroke="#fff" stroke-width="0.55"/>
<circle cx="668.1" cy="281.70" r="5.2" fill="#fff" stroke="#5e9fbf" stroke-width="1.05"/><path d="M666.5 278.80 L669.5 281.70 L666.5 284.60" fill="none" stroke="#4e7681" stroke-width="1.9"/>
</svg>
<div class="a" style="left:380px;top:291.70px;width:374px;height:20.60px;background:#f3f4f5;border-bottom:1px solid #ebedee"></div>
<div class="a" style="left:529.5px;top:291.70px;width:1px;height:20.60px;background:#f0f1f2"></div>
<div class="a" style="left:582.3px;top:291.70px;width:1px;height:20.60px;background:#f0f1f2"></div>
<div class="t" style="left:414.8px;top:298.00px;font-size:8.4px;color:#222;width:113px;overflow:hidden">SRV-CARO\Administratoren</div>
<div class="t" style="left:566.7px;top:298.00px;font-size:8.4px;color:#222">7</div>
<div class="t" style="left:587.9px;top:298.00px;font-size:8.3px;color:#222">Builtin</div>
<div class="t" style="left:733.2px;top:298.00px;font-size:8.4px;color:#222">2</div>
<svg style="left:0;top:0" width="760" height="400">
<path d="M407.60 302.60 L407.60 302.33 A2.50 1.74 0 0 1 412.60 302.33 L412.60 302.60 Q412.60 303.40 411.80 303.40 L408.40 303.40 Q407.60 303.40 407.60 302.60Z" fill="#4e7681"/><circle cx="410.10" cy="299.00" r="1.80" fill="#4e7681" stroke="#f3f4f5" stroke-width="0.55"/>
<path d="M403.80 305.18 L403.80 304.92 A2.55 1.76 0 0 1 408.90 304.92 L408.90 305.18 Q408.90 306.00 408.08 306.00 L404.62 306.00 Q403.80 306.00 403.80 305.18Z" fill="#222" stroke="#f3f4f5" stroke-width="0.6"/><circle cx="406.35" cy="301.53" r="1.83" fill="#222" stroke="#f3f4f5" stroke-width="0.55"/>
<circle cx="668.1" cy="301.50" r="5.2" fill="#fff" stroke="#5e9fbf" stroke-width="1.05"/><path d="M666.5 298.60 L669.5 301.50 L666.5 304.40" fill="none" stroke="#4e7681" stroke-width="1.9"/>
</svg>
<div class="a" style="left:380px;top:312.30px;width:374px;height:19.60px;background:#fff;border-bottom:1px solid #ebedee"></div>
<div class="a" style="left:529.5px;top:312.30px;width:1px;height:19.60px;background:#f0f1f2"></div>
<div class="a" style="left:582.3px;top:312.30px;width:1px;height:19.60px;background:#f0f1f2"></div>
<div class="t" style="left:414.8px;top:317.90px;font-size:8.4px;color:#222;width:113px;overflow:hidden">SRV-CARO\Buchhaltung</div>
<div class="t" style="left:566.7px;top:317.90px;font-size:8.4px;color:#222">8</div>
<div class="t" style="left:587.9px;top:317.90px;font-size:8.3px;color:#222">Groups</div>
<div class="t" style="left:733.2px;top:317.90px;font-size:8.4px;color:#222">2</div>
<svg style="left:0;top:0" width="760" height="400">
<path d="M407.60 322.50 L407.60 322.23 A2.50 1.74 0 0 1 412.60 322.23 L412.60 322.50 Q412.60 323.30 411.80 323.30 L408.40 323.30 Q407.60 323.30 407.60 322.50Z" fill="#4e7681"/><circle cx="410.10" cy="318.90" r="1.80" fill="#4e7681" stroke="#fff" stroke-width="0.55"/>
<path d="M403.80 325.08 L403.80 324.82 A2.55 1.76 0 0 1 408.90 324.82 L408.90 325.08 Q408.90 325.90 408.08 325.90 L404.62 325.90 Q403.80 325.90 403.80 325.08Z" fill="#222" stroke="#fff" stroke-width="0.6"/><circle cx="406.35" cy="321.43" r="1.83" fill="#222" stroke="#fff" stroke-width="0.55"/>
<circle cx="668.1" cy="321.40" r="5.2" fill="#fff" stroke="#5e9fbf" stroke-width="1.05"/><path d="M666.5 318.50 L669.5 321.40 L666.5 324.30" fill="none" stroke="#4e7681" stroke-width="1.9"/>
</svg>
<div class="a" style="left:380px;top:331.90px;width:374px;height:19.60px;background:#f3f4f5;border-bottom:1px solid #ebedee"></div>
<div class="a" style="left:529.5px;top:331.90px;width:1px;height:19.60px;background:#f0f1f2"></div>
<div class="a" style="left:582.3px;top:331.90px;width:1px;height:19.60px;background:#f0f1f2"></div>
<div class="t" style="left:414.8px;top:337.40px;font-size:8.4px;color:#222;width:113px;overflow:hidden">SRV-CARO\Domänen-Benutz</div>
<div class="t" style="left:540px;top:337.40px;font-size:8.4px;color:#222">1</div>
<div class="t" style="left:587.9px;top:337.40px;font-size:8.3px;color:#222">Users</div>
<div class="t" style="left:733.2px;top:337.40px;font-size:8.4px;color:#222">2</div>
<svg style="left:0;top:0" width="760" height="400">
<path d="M407.60 342.00 L407.60 341.73 A2.50 1.74 0 0 1 412.60 341.73 L412.60 342.00 Q412.60 342.80 411.80 342.80 L408.40 342.80 Q407.60 342.80 407.60 342.00Z" fill="#4e7681"/><circle cx="410.10" cy="338.40" r="1.80" fill="#4e7681" stroke="#f3f4f5" stroke-width="0.55"/>
<path d="M403.80 344.58 L403.80 344.32 A2.55 1.76 0 0 1 408.90 344.32 L408.90 344.58 Q408.90 345.40 408.08 345.40 L404.62 345.40 Q403.80 345.40 403.80 344.58Z" fill="#222" stroke="#f3f4f5" stroke-width="0.6"/><circle cx="406.35" cy="340.93" r="1.83" fill="#222" stroke="#f3f4f5" stroke-width="0.55"/>
<circle cx="668.1" cy="340.90" r="5.2" fill="#fff" stroke="#5e9fbf" stroke-width="1.05"/><path d="M666.5 338.00 L669.5 340.90 L666.5 343.80" fill="none" stroke="#4e7681" stroke-width="1.9"/>
</svg>
<div class="a" style="left:380px;top:351.50px;width:374px;height:19.70px;background:#fff;border-bottom:1px solid #ebedee"></div>
<div class="a" style="left:529.5px;top:351.50px;width:1px;height:19.70px;background:#f0f1f2"></div>
<div class="a" style="left:582.3px;top:351.50px;width:1px;height:19.70px;background:#f0f1f2"></div>
<div class="t" style="left:414.8px;top:357.60px;font-size:8.4px;color:#222;width:113px;overflow:hidden">SRV-CARO\Personalverwaltu</div>
<div class="t" style="left:566.7px;top:357.60px;font-size:8.4px;color:#222">5</div>
<div class="t" style="left:587.9px;top:357.60px;font-size:8.3px;color:#222">Groups</div>
<div class="t" style="left:733.2px;top:357.60px;font-size:8.4px;color:#222">2</div>
<svg style="left:0;top:0" width="760" height="400">
<path d="M407.60 362.20 L407.60 361.93 A2.50 1.74 0 0 1 412.60 361.93 L412.60 362.20 Q412.60 363.00 411.80 363.00 L408.40 363.00 Q407.60 363.00 407.60 362.20Z" fill="#4e7681"/><circle cx="410.10" cy="358.60" r="1.80" fill="#4e7681" stroke="#fff" stroke-width="0.55"/>
<path d="M403.80 364.78 L403.80 364.52 A2.55 1.76 0 0 1 408.90 364.52 L408.90 364.78 Q408.90 365.60 408.08 365.60 L404.62 365.60 Q403.80 365.60 403.80 364.78Z" fill="#222" stroke="#fff" stroke-width="0.6"/><circle cx="406.35" cy="361.13" r="1.83" fill="#222" stroke="#fff" stroke-width="0.55"/>
<circle cx="668.1" cy="361.10" r="5.2" fill="#fff" stroke="#5e9fbf" stroke-width="1.05"/><path d="M666.5 358.20 L669.5 361.10 L666.5 364.00" fill="none" stroke="#4e7681" stroke-width="1.9"/>
</svg>
<svg style="left:0;top:0" width="760" height="400"><g fill="#666"><circle cx="518.6" cy="319.10" r=".65"/><circle cx="518.6" cy="321.80" r=".65"/><circle cx="518.6" cy="324.50" r=".65"/></g></svg>
<svg style="left:0;top:0" width="760" height="400">
<g><path d="M542.80 260.94 L542.80 260.63 A2.05 1.58 0 0 1 546.90 260.63 L546.90 260.94 Q546.90 261.60 546.24 261.60 L543.46 261.60 Q542.80 261.60 542.80 260.94Z" fill="#f3dcd8"/><circle cx="544.85" cy="257.62" r="1.62" fill="#f3dcd8" stroke="#c85a4f" stroke-width="0.55"/>
<path d="M539.00 263.05 L539.00 262.76 A2.20 1.62 0 0 1 543.40 262.76 L543.40 263.05 Q543.40 263.75 542.70 263.75 L539.70 263.75 Q539.00 263.75 539.00 263.05Z" fill="#f3dcd8" stroke="#c85a4f" stroke-width="0.5"/><circle cx="541.20" cy="259.67" r="1.67" fill="#f3dcd8" stroke="#c85a4f" stroke-width="0.55"/>
<path d="M565.60 262.69 L565.60 262.44 A3.30 2.14 0 0 1 572.20 262.44 L572.20 262.69 Q572.20 263.75 571.14 263.75 L566.66 263.75 Q565.60 263.75 565.60 262.69Z" fill="#f3dcd8"/><circle cx="568.90" cy="258.25" r="2.25" fill="#f3dcd8" stroke="#c85a4f" stroke-width="0.55"/></g>
</svg>
<!-- bottom scrollbar -->
<div class="a" style="left:381.5px;top:631.6px;width:370.5px;height:7.2px;background:#f0f0f0;border-radius:3.6px"></div>
<div class="a" style="left:382.3px;top:631.9px;width:363.2px;height:6.7px;background:#777;border-radius:3.4px"></div>
<!-- splitter 2 -->
<div class="a" style="left:766.8px;top:91px;width:1.2px;height:553px;background:#7995a0"></div>

<svg style="left:0;top:0" width="770" height="260">
  <!-- person header -->
  <g><path d="M385.20 114.90 L385.20 113.64 A5.00 3.84 0 0 1 395.20 113.64 L395.20 114.90 Q395.20 116.00 394.10 116.00 L386.30 116.00 Q385.20 116.00 385.20 114.90Z" fill="#1f2b31"/><circle cx="390.20" cy="106.00" r="4.00" fill="#1f2b31" stroke="#f3f4f5" stroke-width="0.55"/></g>
  <!-- AD icon -->
  <path d="M407.5 134.6 L404.1 140.4 M407.5 134.6 L410.9 140.4" stroke="#555" stroke-width=".8" fill="none"/><g fill="#5f8a95"><circle cx="407.5" cy="134.6" r="1.25"/><circle cx="404.1" cy="140.4" r="1.25"/><circle cx="410.9" cy="140.4" r="1.25"/></g>
  <!-- logbook small -->
  <rect x="510.6" y="133.2" width="9.5" height="9.5" rx="1" fill="#f5c518"/><circle cx="511.3" cy="133.3" r="1.2" fill="#e05a4a"/>
  <path d="M512.6 140 l2-2 1.5 1 2.3-2.8" stroke="#444" stroke-width=".8" fill="none"/>
  <!-- clock -->
  <g fill="none" stroke="#222" stroke-width=".9"><circle cx="616.5" cy="138.2" r="4"/><path d="M616.5 135.6 v2.8 l1.8 1"/></g>
  <!-- back arrow -->
  <path d="M401 162 l5.5-5 v3.2 h9.5 v3.6 h-9.5 v3.2z" fill="#1e1e1e"/>
  <path d="M453.6 162 l-5.5-5 v3.2 h-9.5 v3.6 h9.5 v3.2z" fill="#999"/>
  <!-- group big -->
  <g><path d="M514.70 164.50 L514.70 163.64 A3.65 3.20 0 0 1 522.00 163.64 L522.00 164.50 Q522.00 165.60 520.90 165.60 L515.80 165.60 Q514.70 165.60 514.70 164.50Z" fill="#4e7681"/><circle cx="518.35" cy="157.72" r="2.92" fill="#4e7681" stroke="#fcfcfc" stroke-width="0.55"/>
<path d="M507.10 168.00 L507.10 167.32 A4.40 2.91 0 0 1 515.90 167.32 L515.90 168.00 Q515.90 169.10 514.80 169.10 L508.20 169.10 Q507.10 169.10 507.10 168.00Z" fill="#222" stroke="#fcfcfc" stroke-width="0.8"/><circle cx="511.50" cy="161.50" r="3.10" fill="#222" stroke="#fcfcfc" stroke-width="0.55"/></g>
  <!-- wrench -->
  <g transform="translate(594.3 167.1) rotate(-45) scale(1.0)"><path d="M0 -1.3 H9.5 V1.3 H0 A1.3 1.3 0 0 1 0 -1.3Z" fill="#4e7681"/><circle cx="0.3" cy="0" r="1.7" fill="#4e7681"/><circle cx="11.6" cy="0" r="3.6" fill="#4e7681"/><circle cx="12.6" cy="0" r="1.75" fill="#fcfcfc"/><rect x="12.6" y="-1.75" width="4" height="3.5" fill="#fcfcfc"/><circle cx="0.3" cy="0" r="0.75" fill="#fcfcfc"/></g>
  <!-- report -->
  <g fill="none" stroke="#4e7681" stroke-width="1.1"><path d="M656.5 155.4 h8 l3.6 3.6 v10.6 h-11.6z"/></g><path d="M664.5 155.4 v3.6 h3.6z" fill="#4e7681"/>
  <path d="M658.5 157.2h3v.9h-3z M658.5 159.2h3v.9h-3z M658.5 162h8v1h-8z M658.5 164.3h7v1h-7z M658.5 166.5h2.5v.9h-2.5z" fill="#4e7681"/>
  <!-- pin -->
  <path d="M723.4 155.4 a4.6 4.6 0 0 1 4.6 4.6 c0 3.2-4.6 9-4.6 9 s-4.6-5.8-4.6-9 a4.6 4.6 0 0 1 4.6-4.6z M723.4 158.4 a1.7 1.7 0 1 0 .01 0z" fill="#4e7681" fill-rule="evenodd"/>
  <!-- carets -->
  <path d="M616 176.8 h6 l-3 3.2z M674 176.8 h5.6 l-2.8 3.2z M741 176.8 h6 l-3 3.2z" fill="#222"/>
  <!-- chevron tabs -->
  <path d="M386.8 209.6 l4 4 4-4" fill="none" stroke="#333" stroke-width="1.1"/>
  <!-- graph icon -->
  <g fill="none" stroke="#333" stroke-width="1"><circle cx="417" cy="209.2" r="1.3"/><circle cx="413" cy="215.5" r="1.3"/><circle cx="421" cy="215.5" r="1.3"/><path d="M416.3 210.4 L413.7 214.3 M417.7 210.4 L420.3 214.3"/></g>
  <!-- tab group icon -->
  <g><path d="M493.50 210.51 L493.50 210.39 A3.10 1.82 0 0 1 499.70 210.39 L499.70 210.51 Q499.70 211.50 498.71 211.50 L494.49 211.50 Q493.50 211.50 493.50 210.51Z" fill="#222"/><circle cx="496.60" cy="206.88" r="1.88" fill="#222" stroke="#fff" stroke-width="0.55"/>
<path d="M488.70 213.49 L488.70 213.32 A3.15 1.92 0 0 1 495.00 213.32 L495.00 213.49 Q495.00 214.50 493.99 214.50 L489.71 214.50 Q488.70 214.50 488.70 213.49Z" fill="#222" stroke="#fff" stroke-width="0.7"/><circle cx="491.85" cy="209.60" r="2.00" fill="#222" stroke="#fff" stroke-width="0.55"/></g>
  <!-- list icon -->
  <g><circle cx="593.5" cy="212.2" r=".9" fill="none" stroke="#333" stroke-width=".6"/><path d="M596 210.3h5.5v1.1H596z M596 212.8h5.5v1.1H596z" fill="#333"/></g>
  <!-- logbook tab icon -->
  <g><path d="M702.7 207.2 h10 v7.5 l-2.7 2.8 h-7.3z" fill="#fff" stroke="#222" stroke-width="1.1"/><path d="M712.7 214.7 h-2.7 v2.8" fill="none" stroke="#222" stroke-width=".8"/><circle cx="703.2" cy="207.8" r="1.2" fill="#111"/><path d="M708 209.5 h3 M705 211.5 l1.3 1.2 1.5-1.5 1.6 1.2 1.6-1.6 M705 215 h3" stroke="#444" stroke-width=".6" fill="none"/></g>
  <!-- funnel -->
  <path d="M389.8 232 h11.2 l-4.5 5 v5 h-2.2 v-5z" fill="#8fb0bb"/>
  <ellipse cx="395.4" cy="232.4" rx="4.8" ry=".9" fill="#fff"/>
</svg>

<!-- ============ RIGHT PANEL ============ -->
<div class="a" style="left:768.3px;top:91px;width:256px;height:553px;background:#fff"></div>
<div class="a" style="left:768.3px;top:91px;width:256px;height:22.8px;background:#f3f4f5;border-bottom:1px solid #e3e6e7"></div>
<div class="t" style="left:811.3px;top:96.5px;font-size:11px;color:#222;letter-spacing:-0.4px">Eigenschaften für SRV-CARO\Babsi....</div>
<div class="t" style="left:775.6px;top:136.3px;font-size:7.7px;color:#222">Export Excel</div>
<div class="a" style="left:771px;top:150.6px;width:250px;height:19.6px;border:1px solid #d6e1e5;border-left:3.5px solid #9bb6bf;border-right:3.5px solid #9bb6bf;border-radius:3px;background:#fff"></div>
<div class="a" style="left:984px;top:152px;width:0;height:17px;border-left:1px dashed #cfdce0"></div>
<div class="t" style="left:794.2px;top:156.3px;font-size:8.9px;font-style:italic;color:#8fb0bb">Filtern...</div>
<div class="t" style="left:991px;top:157px;font-size:7.7px;color:#8fb0bb">9 / 13</div>
<div class="a" style="left:771px;top:173.7px;width:253px;height:20.6px;background:#fff;border-top:1px solid #e8eaeb;border-bottom:1px solid #e3e6e7"></div>
<div class="a" style="left:1014.3px;top:173.7px;width:1px;height:20.6px;background:#e6e8e9"></div>
<div class="t" style="left:783.5px;top:180.5px;font-size:7.8px;color:#555">Name</div>
<div class="t" style="left:882.3px;top:180.5px;font-size:7.8px;color:#555">Wert</div>
<div class="a" style="left:1014.5px;top:197px;width:7px;height:437px;background:#efefef;border-radius:3.5px"></div>
<svg style="left:0;top:0" width="1024" height="200">
  <!-- pin off -->
  <path d="M776.2 98.3 L783.5 105.5" stroke="#4e7681" stroke-width="1.1" fill="none" stroke-linecap="round"/>
  <path d="M776.2 105.5 L780.5 101.2" stroke="#4e7681" stroke-width="1.1" fill="none" stroke-linecap="round"/>
  <path d="M781.5 97.4 L784.2 100.1 L783 100.6 L780.4 103.2 L778.4 101.2 L781 98.6z" fill="#4e7681"/>
  <!-- list icon -->
  <circle cx="794.5" cy="101.9" r="1" fill="none" stroke="#4e7681" stroke-width=".6"/>
  <path d="M797.6 100.4 H805.2 M797.6 103.5 H805.2" stroke="#4e7681" stroke-width="1.3" stroke-linecap="round"/>
  <path d="M991 100.2 h6 l-3 3.3z" fill="#222"/>
  <path d="M1009 98.5 L1016.4 105.9 M1016.4 98.5 L1009 105.9" stroke="#4e7681" stroke-width="1.8" fill="none"/>
  <!-- excel grid -->
  <g><rect x="791" y="119.3" width="12.7" height="12.2" fill="none" stroke="#4e7681" stroke-width=".9"/><rect x="791" y="119" width="12.7" height="2.5" fill="#4e7681"/>
  <path d="M794.2 121.5v10 M797.4 121.5v10 M800.6 121.5v10 M791 124.1h12.7 M791 126.6h12.7 M791 129.1h12.7" stroke="#4e7681" stroke-width=".6"/></g>
  <!-- funnel -->
  <path d="M779 156 h11 l-4.4 5 v5 h-2.2 v-5z" fill="#8fb0bb"/>
  <ellipse cx="784.5" cy="156.4" rx="4.7" ry=".9" fill="#fff"/>
  <!-- up arrow -->
  <path d="M864.2 181.3 v6 M861.8 183.6 l2.4-2.4 2.4 2.4" fill="none" stroke="#333" stroke-width=".9"/>
</svg>
<!-- right scrollbar bottom -->
<div class="a" style="left:770px;top:635px;width:242px;height:8px;background:#f0f0f0;border-radius:4px"></div>
<div class="a" style="left:771.4px;top:636.3px;width:149px;height:6.2px;background:#777;border-radius:3.1px"></div>
<div class="a" style="left:771px;top:195.00px;width:243.3px;height:20.05px;background:#fff;border-bottom:1px solid #e8eaeb"></div>
<div class="t" style="left:783.3px;top:201.10px;font-size:8.4px;color:#222">Account-Expires</div>
<div class="t" style="left:889.5px;top:201.10px;font-size:8.6px;color:#222;width:125px;overflow:hidden">1.1.1970</div>
<div class="a" style="left:771px;top:215.05px;width:243.3px;height:20.05px;background:#f2f3f4;border-bottom:1px solid #e8eaeb"></div>
<div class="t" style="left:783.3px;top:221.15px;font-size:8.4px;color:#222">Common-Name</div>
<div class="t" style="left:889.5px;top:221.15px;font-size:8.6px;color:#222;width:125px;overflow:hidden">Babsi.Böse</div>
<div class="a" style="left:771px;top:235.10px;width:243.3px;height:20.05px;background:#fff;border-bottom:1px solid #e8eaeb"></div>
<div class="t" style="left:783.3px;top:241.20px;font-size:8.4px;color:#222">Country-Code</div>
<div class="t" style="left:889.5px;top:241.20px;font-size:8.6px;color:#222;width:125px;overflow:hidden">0</div>
<div class="a" style="left:771px;top:255.15px;width:243.3px;height:20.05px;background:#f2f3f4;border-bottom:1px solid #e8eaeb"></div>
<div class="t" style="left:783.3px;top:261.25px;font-size:8.4px;color:#222">Obj-Dist-Name</div>
<div class="t" style="left:889.5px;top:261.25px;font-size:8.6px;color:#222;width:125px;overflow:hidden">CN=Babsi.Böse,OU=Users,OU=CARO,DC=caro-demo</div>
<div class="a" style="left:771px;top:275.20px;width:243.3px;height:20.05px;background:#fff;border-bottom:1px solid #e8eaeb"></div>
<div class="t" style="left:783.3px;top:281.30px;font-size:8.4px;color:#222">Object-Sid</div>
<div class="t" style="left:889.5px;top:281.30px;font-size:8.6px;color:#222;width:125px;overflow:hidden">S-1-5-21-721276718-1561617432</div>
<div class="a" style="left:771px;top:295.25px;width:243.3px;height:20.05px;background:#f2f3f4;border-bottom:1px solid #e8eaeb"></div>
<div class="t" style="left:783.3px;top:301.35px;font-size:8.4px;color:#222">Primary-Group-ID</div>
<div class="t" style="left:889.5px;top:301.35px;font-size:8.6px;color:#222;width:125px;overflow:hidden">513</div>
<div class="a" style="left:771px;top:315.30px;width:243.3px;height:20.05px;background:#fff;border-bottom:1px solid #e8eaeb"></div>
<div class="t" style="left:783.3px;top:321.40px;font-size:8.4px;color:#222">Pwd-Last-Set</div>
<div class="t" style="left:889.5px;top:321.40px;font-size:8.6px;color:#222;width:125px;overflow:hidden">01/22/2026 20:49:56</div>
<div class="a" style="left:771px;top:335.35px;width:243.3px;height:20.05px;background:#f2f3f4;border-bottom:1px solid #e8eaeb"></div>
<div class="t" style="left:783.3px;top:341.45px;font-size:8.4px;color:#222">SAM-Account-Name</div>
<div class="t" style="left:889.5px;top:341.45px;font-size:8.6px;color:#222;width:125px;overflow:hidden">bböse</div>
<div class="a" style="left:771px;top:355.40px;width:243.3px;height:20.05px;background:#fff;border-bottom:1px solid #e8eaeb"></div>
<div class="t" style="left:783.3px;top:356.80px;font-size:8.4px;color:#222;line-height:9.5px">User-Account-<br>Control</div>
<div class="t" style="left:889.5px;top:361.50px;font-size:8.6px;color:#222;width:125px;overflow:hidden">66048</div>
<div class="a" style="left:875.2px;top:173.7px;width:1px;height:201.8px;background:#e6e8e9"></div>
<div class="a" style="left:373.9px;top:362.6px;width:1.6px;height:12.2px;background:#fff"></div>
<div class="a" style="left:766.6px;top:362.6px;width:1.6px;height:12.2px;background:#fff"></div>
<svg style="left:0;top:0" width="1024" height="644"><g fill="#3f6470"><circle cx="374.6" cy="365.3" r="1.15"/><circle cx="374.6" cy="368.6" r="1.15"/><circle cx="374.6" cy="371.9" r="1.15"/><circle cx="767.5" cy="365.3" r="1.2"/><circle cx="767.5" cy="368.6" r="1.2"/><circle cx="767.5" cy="371.9" r="1.2"/></g></svg><svg style="left:0;top:0" width="1024" height="644">
<path d="M1024 630 V644 H1010 Q1022 642 1024 630z" fill="#2b3a1a"/>
<path d="M1024 630 Q1023.5 638 1020 640 L1024 640z" fill="#5a4020"/>
<path d="M0 0 H6 Q1 1 0 6z" fill="#c9ced3"/>
<path d="M1024 0 H1014 Q1023 1 1024 9z" fill="#c9ced3"/>
</svg>
</body></html>
